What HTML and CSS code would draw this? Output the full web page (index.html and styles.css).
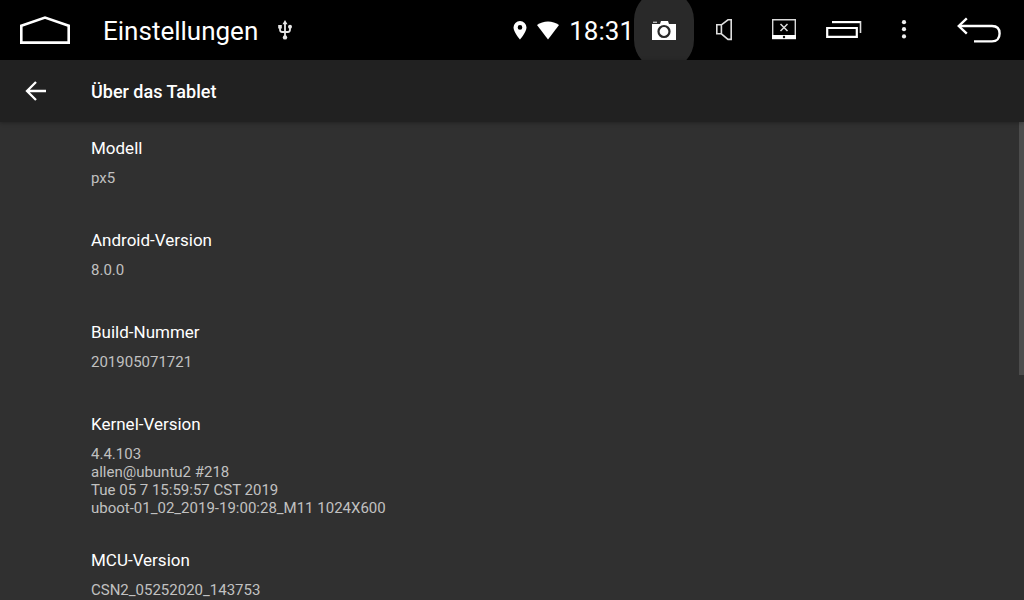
FILE: index.html
```html
<!DOCTYPE html>
<html lang="de">
<head>
    <meta charset="UTF-8">
    <meta name="viewport" content="width=device-width, initial-scale=1.0">
    <title>Einstellungen</title>
    <link rel="stylesheet" href="styles.css">
</head>
<body>
    <!-- Statusleiste -->
    <header class="status-bar">
        <button type="button" class="bar-button wide" aria-label="Startseite">
            <svg width="50" height="28" viewBox="0 0 50 28" fill="none" stroke="#fff" stroke-width="2.6">
                <path d="M1.3 9.8 L25 1.6 L48.7 9.8 V26.6 H1.3 Z"/>
            </svg>
        </button>
        <span class="app-name">Einstellungen</span>
        <svg class="usb-icon" width="14" height="20" viewBox="0 0 14 20" fill="none" stroke="#e6e6e6" stroke-width="1.8">
            <path d="M7 3 V17 M2 7 V9.5 Q2 12 4.2 12 H9.8 Q12 12 12 9.5 V7"/>
            <path d="M7 0 L9.5 4.2 H4.5 Z M0.2 5 H3.8 V8.6 H0.2 Z" fill="#e6e6e6" stroke="none"/>
            <circle cx="12" cy="6.8" r="2" fill="#e6e6e6" stroke="none"/>
            <circle cx="7" cy="17.4" r="2.2" fill="#e6e6e6" stroke="none"/>
        </svg>

        <div class="status-info">
            <svg width="14" height="19" viewBox="0 0 14 19" fill="#fff">
                <path fill-rule="evenodd" d="M7 0 A6.5 6.5 0 0 0 0.5 6.5 C0.5 11.2 7 18.5 7 18.5 S13.5 11.2 13.5 6.5 A6.5 6.5 0 0 0 7 0 Z M7 4.1 A2.3 2.3 0 1 1 7 8.7 A2.3 2.3 0 1 1 7 4.1 Z"/>
            </svg>
            <svg width="22" height="19" viewBox="0 0 22 19" fill="#fff">
                <path d="M0 4 Q4.8 0.5 11 0.5 T22 4 L11 18.5 Z"/>
            </svg>
            <time class="clock">18:31</time>
        </div>

        <button type="button" class="bar-button active" aria-label="Screenshot">
            <svg width="24" height="20" viewBox="0 0 24 20">
                <path d="M0 4 H8 L9 1 H16 L17 4 H24 V20 H0 Z" fill="#fff"/>
                <path d="M1 1.6 H5 V3 H1 Z" fill="#bbb"/>
                <circle cx="12" cy="11.5" r="5.5" fill="none" stroke="#292929" stroke-width="2.2"/>
            </svg>
        </button>
        <button type="button" class="bar-button" aria-label="Lautstärke">
            <svg width="16" height="22" viewBox="0 0 16 22" fill="none" stroke="#ddd" stroke-width="1.6">
                <path d="M0.8 5.8 H5.4 V14.8 H0.8 Z M5.4 5.8 L12 0.8 H15.2 V20.4 H12 L5.4 14.8"/>
            </svg>
        </button>
        <button type="button" class="bar-button" aria-label="Bildschirm aus">
            <svg width="24" height="22" viewBox="0 0 24 22">
                <path d="M0.7 0.7 H23.3 V19.5 H0.7 Z" fill="none" stroke="#d8d8d8" stroke-width="1.4"/>
                <path d="M0 16 H24 V20 H0 Z" fill="#fff"/>
                <path d="M8.5 5 L15.5 12 M15.5 5 L8.5 12" stroke="#ddd" stroke-width="1.5"/>
                <circle cx="12" cy="18" r="1.2" fill="#111"/>
            </svg>
        </button>
        <button type="button" class="bar-button" aria-label="Letzte Apps">
            <svg width="36" height="18" viewBox="0 0 36 18" fill="none" stroke="#fff">
                <path d="M1.2 7 H30.8 V15.8 H1.2 Z" stroke-width="2.2"/>
                <path d="M6 1.1 H35" stroke-width="2.2"/>
                <path d="M34.5 0 V12" stroke="#ddd" stroke-width="1.6"/>
            </svg>
        </button>
        <button type="button" class="bar-button" aria-label="Menü">
            <svg width="6" height="20" viewBox="0 0 6 20" fill="#f0f0f0">
                <circle cx="3" cy="2.2" r="2.1"/>
                <circle cx="3" cy="9.2" r="2.1"/>
                <circle cx="3" cy="16.4" r="2.1"/>
            </svg>
        </button>
        <button type="button" class="bar-button wide" aria-label="Zurück">
            <svg width="44" height="26" viewBox="0 0 44 26" fill="none" stroke="#fff" stroke-width="2.4">
                <path d="M2 9 H35 C40 9 42.6 12 42.6 16.5 S40 24.4 35 24.4 H17"/>
                <path d="M9.8 1.4 L1.8 9 L9.8 16.6"/>
            </svg>
        </button>
    </header>

    <!-- Titelleiste -->
    <div class="title-bar">
        <button type="button" class="back-button" aria-label="Nach oben">
            <svg width="22" height="20" viewBox="0 0 22 20" fill="none" stroke="#fff" stroke-width="2.3">
                <path d="M2 10 H21 M11 1 L2 10 L11 19"/>
            </svg>
        </button>
        <h1>Über das Tablet</h1>
    </div>

    <!-- Geräteinformationen -->
    <main class="content">
        <dl class="info-list">
            <div class="info-item">
                <dt>Modell</dt>
                <dd>px5</dd>
            </div>
            <div class="info-item">
                <dt>Android-Version</dt>
                <dd>8.0.0</dd>
            </div>
            <div class="info-item">
                <dt>Build-Nummer</dt>
                <dd>201905071721</dd>
            </div>
            <div class="info-item">
                <dt>Kernel-Version</dt>
                <dd>4.4.103<br>allen@ubuntu2 #218<br>Tue 05 7 15:59:57 CST 2019<br>uboot-01_02_2019-19:00:28_M11 1024X600</dd>
            </div>
            <div class="info-item">
                <dt>MCU-Version</dt>
                <dd>CSN2_05252020_143753</dd>
            </div>
        </dl>
        <div class="scroll-thumb"></div>
    </main>
</body>
</html>
```

FILE: styles.css
```css
* {
    box-sizing: border-box;
}

body {
    font-family: Roboto, "Liberation Sans", sans-serif;
    background-color: #303030;
    color: #fff;
    margin: 0;
    height: 100vh;
    display: flex;
    flex-direction: column;
    overflow: hidden;
}

button {
    padding: 0;
    border: none;
    background: none;
    cursor: pointer;
    display: flex;
    align-items: center;
    justify-content: center;
}

svg {
    display: block;
    flex-shrink: 0;
}

.status-bar {
    flex: none;
    height: 60px;
    background-color: #000;
    display: flex;
    align-items: center;
    overflow: hidden;
}

.bar-button {
    width: 60px;
    height: 60px;
    flex-shrink: 0;
}

.bar-button.wide {
    width: 90px;
}

/* higher than the bar, so top and bottom are cut off */
.bar-button.active {
    height: 80px;
    background-color: #292929;
    border-radius: 30px;
}

.app-name,
.clock {
    padding-top: 2px;
    font-size: 26px;
    line-height: 32px;
}

.app-name {
    margin-left: 13px;
}

.usb-icon {
    margin-left: 20px;
}

.status-info {
    margin-left: auto;
    display: flex;
    align-items: center;
    gap: 10px;
}

.title-bar {
    flex: none;
    height: 62px;
    background-color: #212121;
    box-shadow: 0 1px 4px rgba(0, 0, 0, 0.3);
    display: flex;
    align-items: center;
    position: relative;
    z-index: 1;
}

.back-button {
    width: 72px;
    height: 60px;
}

h1 {
    margin: 0 0 0 19px;
    padding-top: 2px;
    font-size: 18px;
    line-height: 24px;
    font-weight: 500;
}

.content {
    flex: 1;
    min-height: 0;
    position: relative;
    overflow: hidden;
}

.info-list {
    margin: 0;
}

.info-item {
    min-height: 92px;
    padding: 14px 24px 17px 91px;
}

dt {
    font-size: 17px;
    line-height: 24px;
}

dd {
    margin: 9px 0 0;
    font-size: 15px;
    line-height: 18px;
    color: #c1c1c1;
}

.scroll-thumb {
    position: absolute;
    top: 0;
    right: 0;
    width: 5px;
    height: 53%;
    background-color: #4c4c4c;
}
```
